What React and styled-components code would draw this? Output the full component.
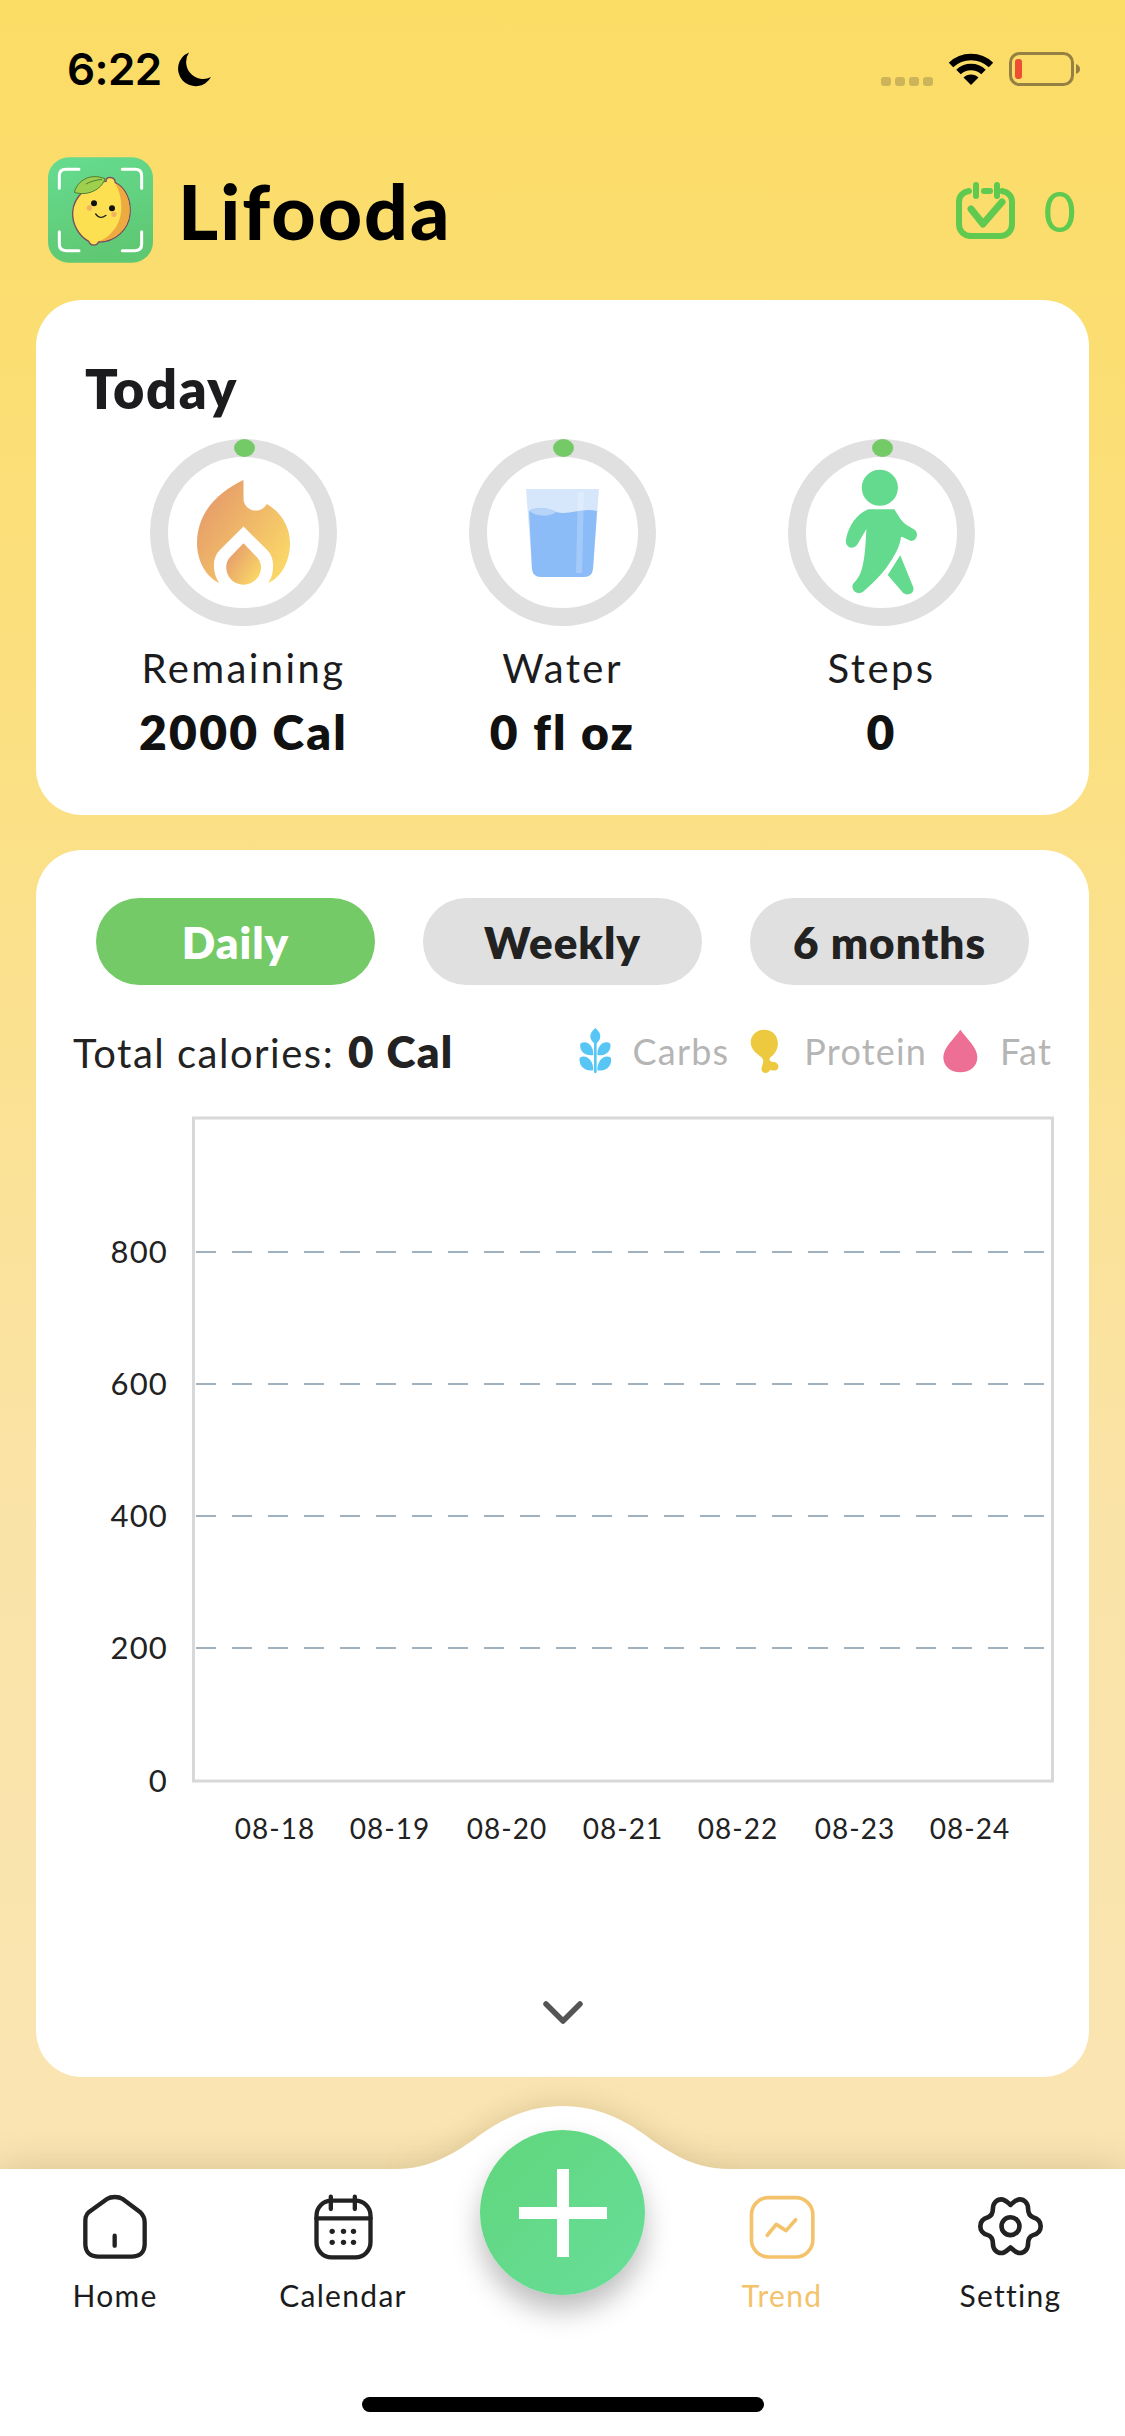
import React from 'react';
import styled, { createGlobalStyle } from 'styled-components';

const GlobalStyle = createGlobalStyle`
  * { box-sizing: border-box; }
  html, body { margin: 0; padding: 0; background: #fff; }
  body { font-family: "Lato", "Noto Sans", sans-serif; }
`;

const Page = styled.div`
  width: 1125px;
  height: 2436px;
  overflow: hidden;
  display: flex;
  flex-direction: column;
  background: linear-gradient(180deg, #fbdc65 0%, #fbdf7c 25%, #fae3a5 60%, #fae5b9 100%);
`;

const StatusBar = styled.div`
  height: 157px;
  padding: 52px 44px 0 67px;
  display: flex;
  justify-content: space-between;
  align-items: flex-start;
`;

const StatusLeft = styled.div`
  display: flex;
  align-items: center;
  gap: 13px;
  height: 34px;
`;

const Time = styled.span`
  font-family: "Inter", sans-serif;
  font-weight: 600;
  font-size: 44px;
  line-height: 34px;
  letter-spacing: -0.6px;
  color: #000;
`;

const StatusRight = styled.div`
  display: flex;
  align-items: flex-end;
  gap: 15px;
  height: 34px;
`;

const Header = styled.div`
  height: 106px;
  padding: 0 49px 0 48px;
  display: flex;
  align-items: center;
`;

const Title = styled.h1`
  margin: 0 0 0 25px;
  flex: 1;
  font-size: 77px;
  line-height: 106px;
  font-weight: 900;
  letter-spacing: 2px;
  color: #000;
`;

const Streak = styled.span`
  margin-left: 29px;
  font-size: 56px;
  font-weight: 400;
  color: #5fca4f;
`;

const Card = styled.section`
  margin: 0 36px;
  background: #fff;
  border-radius: 46px;
`;

const TodayCard = styled(Card)`
  margin-top: 37px;
  height: 515px;
  padding: 59px 48px 0;
`;

const TodayTitle = styled.h2`
  margin: 0 0 0 1px;
  font-size: 54px;
  line-height: 60px;
  font-weight: 800;
  letter-spacing: 1.6px;
  color: #1c1c1e;
`;

const Goals = styled.div`
  margin-top: 20px;
  display: grid;
  grid-template-columns: repeat(3, 319px);
`;

const Goal = styled.div`
  display: flex;
  flex-direction: column;
  align-items: center;
`;

const Ring = styled.div`
  position: relative;
  width: 187px;
  height: 187px;
  border: 18px solid #e0e0e0;
  border-radius: 50%;
  display: flex;
  align-items: center;
  justify-content: center;
`;

const RingDot = styled.span`
  position: absolute;
  top: -18px;
  left: 50%;
  width: 21px;
  height: 18px;
  margin-left: -10px;
  border-radius: 50%;
  background: #75ca68;
`;

const GoalLabel = styled.div`
  margin-top: 18px;
  font-size: 40px;
  line-height: 48px;
  letter-spacing: 2.4px;
  color: #1c1c1e;
`;

const GoalValue = styled.div`
  margin-top: 14px;
  font-size: 48px;
  line-height: 52px;
  font-weight: 800;
  letter-spacing: 2.2px;
  color: #111;
`;

const TrendCard = styled(Card)`
  margin-top: 35px;
  height: 1227px;
  padding-top: 48px;
  display: flex;
  flex-direction: column;
`;

const Tabs = styled.div`
  padding: 0 60px;
  display: flex;
  gap: 48px;
`;

const Tab = styled.div`
  width: 279px;
  height: 87px;
  border-radius: 44px;
  display: flex;
  align-items: center;
  justify-content: center;
  font-size: 44px;
  font-weight: 800;
  letter-spacing: 1px;
  background: ${(p) => (p.$active ? '#75ca68' : '#e0e0e0')};
  color: ${(p) => (p.$active ? '#fff' : '#222')};
`;

const Summary = styled.div`
  margin-top: 41px;
  padding: 0 37px;
  display: flex;
  align-items: center;
  justify-content: space-between;
  height: 50px;
`;

const Total = styled.div`
  font-size: 40px;
  letter-spacing: 1.5px;
  color: #222;
  strong {
    margin-left: 2px;
    font-size: 44px;
    font-weight: 800;
    letter-spacing: 1.4px;
  }
`;

const Legend = styled.div`
  display: flex;
  align-items: center;
`;

const LegendItem = styled.span`
  display: flex;
  align-items: center;
  gap: ${(p) => p.$gap}px;
  margin-left: ${(p) => p.$offset}px;
  font-size: 36px;
  letter-spacing: 1.2px;
  color: #b5b5b5;
`;

const ChartSvg = styled.svg`
  display: block;
  margin-top: 34px;
  width: 1053px;
  height: 760px;
`;

const AxisText = styled.text`
  font-family: "Lato", sans-serif;
  font-size: ${(p) => p.$size}px;
  letter-spacing: ${(p) => p.$spacing}px;
  fill: #222;
`;

const Chevron = styled.div`
  margin-top: 130px;
  display: flex;
  justify-content: center;
`;

const TabBar = styled.nav`
  position: relative;
  margin-top: 92px;
  height: 267px;
  background: #fff;
  box-shadow: 0 0 36px rgba(120, 100, 50, 0.28);
  display: grid;
  grid-template-columns: 230px 226px 212px 228px 229px;
  align-items: start;
  padding-top: 26px;
`;

const Hump = styled.svg`
  position: absolute;
  left: 380px;
  top: -63px;
  filter: drop-shadow(0 -2px 14px rgba(120, 100, 50, 0.22));
`;

const HumpCover = styled.div`
  position: absolute;
  left: 0;
  right: 0;
  top: 0;
  bottom: 0;
  background: #fff;
`;

const NavItem = styled.div`
  position: relative;
  display: flex;
  flex-direction: column;
  align-items: center;
  gap: 19px;
  font-size: 30px;
  line-height: 36px;
  letter-spacing: 1.3px;
  color: ${(p) => (p.$active ? '#f4c26b' : '#1c1c1e')};
`;

const NavIcon = styled.div`
  height: 63px;
  display: flex;
  align-items: center;
  justify-content: center;
`;

const Fab = styled.div`
  position: absolute;
  left: 480px;
  top: -39px;
  width: 165px;
  height: 165px;
  border-radius: 50%;
  background: linear-gradient(135deg, #60d67c, #68de9a);
  box-shadow: 0 16px 28px rgba(0, 0, 0, 0.26);
  display: flex;
  align-items: center;
  justify-content: center;
`;

const HomeBar = styled.div`
  position: absolute;
  left: 362px;
  top: 228px;
  width: 402px;
  height: 15px;
  border-radius: 8px;
  background: #000;
`;

const SignalDots = styled.div`
  display: flex;
  gap: 4px;
`;

const SignalDot = styled.span`
  width: 10px;
  height: 9px;
  border-radius: 3px;
  background: #cdb45a;
`;

const goals = [
  { label: 'Remaining', value: '2000 Cal', icon: <FlameIcon /> },
  { label: 'Water', value: '0 fl oz', icon: <GlassIcon /> },
  { label: 'Steps', value: '0', icon: <WalkerIcon /> },
];

const gridLines = [
  { label: '800', y: 142 },
  { label: '600', y: 274 },
  { label: '400', y: 406 },
  { label: '200', y: 538 },
];
const days = [
  ['08-18', 239],
  ['08-19', 354],
  ['08-20', 471],
  ['08-21', 587],
  ['08-22', 702],
  ['08-23', 819],
  ['08-24', 934],
];

function MoonIcon() {
  return (
    <svg width="37" height="35" viewBox="0 0 37 35">
      <path d="M14 0.5 A17.5 17.5 0 1 0 36 25 A17 17 0 0 1 14 0.5Z" fill="#000" />
    </svg>
  );
}

function WifiIcon() {
  return (
    <svg width="46" height="34" viewBox="0 0 46 34" fill="none" stroke="#000" strokeWidth="6.4">
      <path d="M3 13 A29 29 0 0 1 43 13" />
      <path d="M10.5 20 A18 18 0 0 1 35.5 20" />
      <path d="M23 33 L15.5 25.6 A10.5 10.5 0 0 1 30.5 25.6 Z" fill="#000" stroke="none" />
    </svg>
  );
}

function BatteryIcon() {
  return (
    <svg width="72" height="34" viewBox="0 0 72 34">
      <rect x="1.5" y="1.5" width="62" height="31" rx="9" fill="none" stroke="#958043" strokeWidth="3" />
      <rect x="6" y="7" width="7" height="20" rx="3" fill="#ee4f34" />
      <path d="M67 12 C70 13 71 15 71 17 C71 19 70 21 67 22 Z" fill="#958043" />
    </svg>
  );
}

function LemonLogo() {
  return (
    <svg width="105" height="106" viewBox="24 52 315 316">
      <defs>
        <linearGradient id="logoBg" x1="0" y1="0" x2="0.3" y2="1">
          <stop offset="0" stopColor="#66dc90" />
          <stop offset="1" stopColor="#5fc873" />
        </linearGradient>
      </defs>
      <rect x="24" y="52" width="315" height="316" rx="62" fill="url(#logoBg)" />
      <g fill="none" stroke="#fff" strokeWidth="9" strokeLinecap="round">
        <path d="M58 145 V107 Q58 88 78 88 H117" />
        <path d="M247 88 H285 Q305 88 305 107 V145" />
        <path d="M58 275 V313 Q58 332 78 332 H117" />
        <path d="M247 332 H285 Q305 332 305 313 V275" />
      </g>
      <path
        d="M205 113 C222 110 226 122 226 128 C258 144 274 184 270 222 C266 268 226 306 176 306 C170 318 152 320 146 304 C116 288 96 252 98 216 C100 170 150 124 198 124 C198 118 200 114 205 113Z"
        fill="#fde052"
        stroke="#7b4b5c"
        strokeWidth="4"
      />
      <path
        d="M226 130 C258 146 272 186 268 222 C264 266 224 304 178 304 C220 286 246 246 244 196 C243 170 236 148 226 130Z"
        fill="#eeaa40"
      />
      <path d="M103 157 C112 122 150 98 195 116 C186 148 142 170 103 157Z" fill="#9ed04e" stroke="#4f7d33" strokeWidth="3" />
      <path d="M138 132 C152 124 168 120 186 118" stroke="#4f7d33" strokeWidth="3" fill="none" />
      <circle cx="162" cy="190" r="9" fill="#111" />
      <circle cx="216" cy="205" r="9" fill="#111" />
      <circle cx="148" cy="204" r="8" fill="#f3b25f" />
      <circle cx="222" cy="223" r="8" fill="#f3b25f" />
      <path d="M167 222 Q180 240 198 226" fill="none" stroke="#222" strokeWidth="4" strokeLinecap="round" />
    </svg>
  );
}

function CheckCalendarIcon() {
  return (
    <svg width="59" height="57" viewBox="0 0 59 57" fill="none" stroke="#5fca4f" strokeWidth="6" strokeLinecap="round" strokeLinejoin="round">
      <path d="M13 9 C7 10 3 14 3 20 V42 C3 49 8 54 15 54 H44 C51 54 56 49 56 42 V20 C56 14 52 10 46 9" />
      <path d="M28 9 H34" />
      <path d="M20 3 V14" />
      <path d="M41 3 V14" />
      <path d="M15 27 L27 42 L46 20" strokeWidth="7" />
    </svg>
  );
}

function FlameIcon() {
  return (
    <svg width="93" height="105" viewBox="0 0 280 316">
      <defs>
        <linearGradient id="flame" x1="0" y1="0.1" x2="1" y2="0.9">
          <stop offset="0" stopColor="#e3956a" />
          <stop offset="1" stopColor="#fcdc68" />
        </linearGradient>
      </defs>
      <path
        d="M140 0 V55 C140 78 158 92 176 92 C192 92 204 84 210 72 C252 96 280 140 280 190 C280 242 256 290 215 310 C226 292 229 276 229 258 C229 234 220 218 205 205 L140 140 L75 205 C60 218 51 234 51 258 C51 276 56 294 67 310 C26 290 0 242 0 190 C0 100 60 38 140 0Z"
        fill="url(#flame)"
      />
      <path
        d="M140 190 L180 232 C188 240 193 252 193 262 C193 292 170 315 140 315 C110 315 88 292 88 262 C88 252 92 240 100 232Z"
        fill="url(#flame)"
      />
    </svg>
  );
}

function GlassIcon() {
  return (
    <svg width="73" height="88" viewBox="0 0 73 88">
      <path d="M0 0 H73 L67 80 Q66 88 58 88 H15 Q7 88 6 80Z" fill="#d6e7fb" />
      <path d="M3 22 C12 17 22 19 30 23 C42 27 56 18 71 22 L67 80 Q66 88 58 88 H15 Q7 88 6 80Z" fill="#8bbcf8" />
      <path d="M3 22 C12 17 22 19 30 23 C22 29 10 27 3 22Z" fill="#b6d3f8" />
      <path d="M52 3 H58 L56 84 H50Z" fill="#fff" opacity="0.22" />
    </svg>
  );
}

function WalkerIcon() {
  return (
    <svg width="73" height="127" viewBox="220 145 222 382">
      <circle cx="326" cy="200" r="55" fill="#64da8e" />
      <path
        d="M290 265 H370 C380 280 390 300 405 312 L432 328 C444 338 440 362 420 362 L395 350 L390 350 C388 375 376 400 345 445 C325 470 300 495 275 516 C255 530 232 505 248 488 C270 465 280 440 285 325 L258 372 C245 392 216 382 224 352 C232 315 255 280 290 265Z"
        fill="#64da8e"
      />
      <path d="M388 405 L428 503 C432 525 405 530 395 518 L350 465Z" fill="#64da8e" />
    </svg>
  );
}

function WheatIcon() {
  return (
    <svg width="32" height="46" viewBox="60 25 96 138" fill="#58c6f5">
      <path d="M109 25 C128 40 130 58 109 74 C88 58 90 40 109 25Z" />
      <path d="M64 72 C80 60 104 74 103 106 C80 110 60 96 64 72Z" />
      <path d="M154 72 C138 60 114 74 115 106 C138 110 158 96 154 72Z" />
      <path d="M62 114 C82 102 104 122 103 152 C78 156 58 140 62 114Z" />
      <path d="M156 114 C136 102 114 122 115 152 C140 156 160 140 156 114Z" />
      <path d="M105 70 H113 V158 Q109 164 105 158Z" />
    </svg>
  );
}

function DrumstickIcon() {
  return (
    <svg width="31" height="45" viewBox="578 25 92 135" fill="#ecc93f">
      <path d="M622 27 C650 27 666 48 664 72 C662 94 648 104 640 112 C638 118 640 122 648 124 C664 122 672 140 660 148 C652 152 646 148 640 148 C636 160 616 160 615 146 C614 138 622 130 620 118 C618 108 602 102 592 90 C570 62 590 27 622 27Z" />
    </svg>
  );
}

function DropIcon() {
  return (
    <svg width="35" height="44" viewBox="1145 30 105 132">
      <path d="M1197 32 C1215 58 1248 85 1248 115 C1248 142 1226 160 1197 160 C1168 160 1146 142 1146 115 C1146 85 1180 58 1197 32Z" fill="#ee6f96" />
    </svg>
  );
}

function HomeIcon() {
  return (
    <svg width="66" height="66" viewBox="65 40 198 198" fill="none" stroke="#222" strokeWidth="13" strokeLinecap="round" strokeLinejoin="round">
      <path d="M140 55 L85 95 C75 105 75 112 75 125 V190 C75 215 90 228 115 228 H213 C238 228 253 215 253 190 V125 C253 112 250 105 240 95 L187 55 C175 47 152 47 140 55Z" />
      <path d="M163 165 V195" />
    </svg>
  );
}

function CalendarIcon() {
  return (
    <svg width="61" height="66" viewBox="760 40 182 198" fill="none" stroke="#222" strokeWidth="13" strokeLinecap="round">
      <rect x="770" y="60" width="162" height="170" rx="45" />
      <path d="M770 113 H932" />
      <path d="M813 48 V85" />
      <path d="M885 48 V85" />
      <g fill="#222" stroke="none">
        <circle cx="817" cy="152" r="8" />
        <circle cx="851" cy="152" r="8" />
        <circle cx="881" cy="152" r="8" />
        <circle cx="817" cy="185" r="8" />
        <circle cx="851" cy="185" r="8" />
        <circle cx="881" cy="185" r="8" />
      </g>
    </svg>
  );
}

function TrendIcon() {
  return (
    <svg width="68" height="66" viewBox="25 37 205 200" fill="none" stroke="#f4c26b" strokeWidth="11" strokeLinecap="round" strokeLinejoin="round">
      <rect x="35" y="48" width="186" height="180" rx="52" />
      <path d="M83 162 L110 129 L140 148 L169 115" />
    </svg>
  );
}

function GearIcon() {
  return (
    <svg width="67" height="63" viewBox="50 43 200 190" fill="none" stroke="#222" strokeWidth="14" strokeLinejoin="round">
      <path d="M150 73 C158 66 166 56 178 56 C192 56 203 68 203 84 C203 96 206 106 218 110 C232 114 241 122 241 137 C241 152 232 160 218 164 C206 168 203 178 203 190 C203 206 192 218 178 218 C166 218 158 208 150 201 C142 208 134 218 122 218 C108 218 97 206 97 190 C97 178 94 168 82 164 C68 160 59 152 59 137 C59 122 68 114 82 110 C94 106 97 96 97 84 C97 68 108 56 122 56 C134 56 142 66 150 73Z" />
      <circle cx="150" cy="137" r="27" />
    </svg>
  );
}

function App() {
  return (
    <Page>
      <GlobalStyle />
      <StatusBar>
        <StatusLeft>
          <Time>6:22</Time>
          <MoonIcon />
        </StatusLeft>
        <StatusRight>
          <SignalDots>
            <SignalDot />
            <SignalDot />
            <SignalDot />
            <SignalDot />
          </SignalDots>
          <WifiIcon />
          <BatteryIcon />
        </StatusRight>
      </StatusBar>

      <Header>
        <LemonLogo />
        <Title>Lifooda</Title>
        <CheckCalendarIcon />
        <Streak>0</Streak>
      </Header>

      <TodayCard>
        <TodayTitle>Today</TodayTitle>
        <Goals>
          {goals.map((g) => (
            <Goal key={g.label}>
              <Ring>
                <RingDot />
                {g.icon}
              </Ring>
              <GoalLabel>{g.label}</GoalLabel>
              <GoalValue>{g.value}</GoalValue>
            </Goal>
          ))}
        </Goals>
      </TodayCard>

      <TrendCard>
        <Tabs>
          <Tab $active>Daily</Tab>
          <Tab>Weekly</Tab>
          <Tab>6 months</Tab>
        </Tabs>
        <Summary>
          <Total>
            Total calories: <strong>0 Cal</strong>
          </Total>
          <Legend>
            <LegendItem $gap={22} $offset={0}>
              <WheatIcon />
              Carbs
            </LegendItem>
            <LegendItem $gap={24} $offset={20}>
              <DrumstickIcon />
              Protein
            </LegendItem>
            <LegendItem $gap={22} $offset={16}>
              <DropIcon />
              Fat
            </LegendItem>
          </Legend>
        </Summary>
        <ChartSvg viewBox="0 0 1053 760">
          <rect x="157.5" y="8" width="859" height="663" fill="none" stroke="#d8d8d8" strokeWidth="3" />
          {gridLines.map((l) => (
            <g key={l.label}>
              <line x1="160" x2="1014" y1={l.y} y2={l.y} stroke="#9fb0bf" strokeWidth="2" strokeDasharray="20 16" />
              <AxisText $size={31} $spacing={1.2} x="132" y={l.y + 11} textAnchor="end">{l.label}</AxisText>
            </g>
          ))}
          <AxisText $size={31} $spacing={1.2} x="132" y="682" textAnchor="end">0</AxisText>
          {days.map(([d, x]) => (
            <AxisText $size={28} $spacing={1} key={d} x={x} y="729" textAnchor="middle">{d}</AxisText>
          ))}
        </ChartSvg>
        <Chevron>
          <svg width="40" height="25" viewBox="0 0 40 25" fill="none" stroke="#555" strokeWidth="5.5" strokeLinecap="round" strokeLinejoin="round">
            <path d="M3 4 L20 21 L37 4" />
          </svg>
        </Chevron>
      </TrendCard>

      <TabBar>
        <Hump width="366" height="64" viewBox="0 48 1098 192">
          <path d="M50 237 C150 237 220 190 280 150 C360 90 440 48 548 48 C650 48 740 90 815 150 C880 195 950 237 1045 237 V240 H50Z" fill="#fff" />
        </Hump>
        <HumpCover />
        <NavItem>
          <NavIcon><HomeIcon /></NavIcon>
          Home
        </NavItem>
        <NavItem>
          <NavIcon><CalendarIcon /></NavIcon>
          Calendar
        </NavItem>
        <div />
        <NavItem $active>
          <NavIcon><TrendIcon /></NavIcon>
          Trend
        </NavItem>
        <NavItem>
          <NavIcon><GearIcon /></NavIcon>
          Setting
        </NavItem>
        <Fab>
          <svg width="88" height="88" viewBox="0 0 88 88" fill="#fff">
            <rect x="38" y="0" width="12" height="88" />
            <rect x="0" y="38" width="88" height="12" />
          </svg>
        </Fab>
        <HomeBar />
      </TabBar>
    </Page>
  );
}

export default App;
